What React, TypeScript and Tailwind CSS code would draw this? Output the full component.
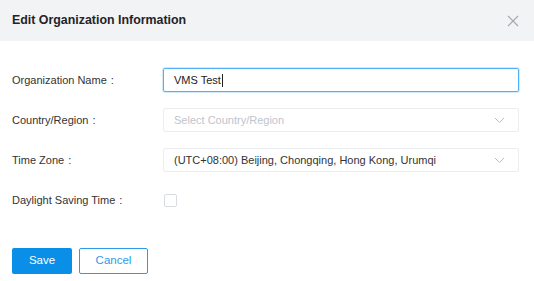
import React from "react";

const Chevron = () => (
  <svg width="11" height="7" viewBox="0 0 11 7" className="shrink-0">
    <path d="M1 1 L5.5 5.5 L10 1" fill="none" stroke="#b8bcc4" strokeWidth="1" />
  </svg>
);

export default function App() {
  return (
    <div className="w-[534px] h-[281px] bg-white overflow-hidden" style={{ fontFamily: '"Liberation Sans", Arial, sans-serif' }}>
      <div className="h-[41px] bg-[#f2f3f5] flex items-center justify-between pl-[12px] pr-[15px]">
        <span className="text-[12.4px] font-bold text-[#1f2329]">Edit Organization Information</span>
        <svg width="12" height="12" viewBox="0 0 12 12">
          <path d="M1 1 L11 11 M11 1 L1 11" stroke="#a3a6ad" strokeWidth="1.1" />
        </svg>
      </div>
      <div className="pl-[12px] pr-[15px] pt-[27px] flex flex-col gap-[16px]">
        <div className="flex items-center h-[24px]">
          <div className="w-[151px] text-[11px] text-[#333]">Organization Name<span className="ml-[4px]">:</span></div>
          <div className="flex-1 h-[24px] border border-[#4fb0f5] rounded-[2px] shadow-[0_0_0_1px_rgba(79,176,245,0.25)] flex items-center px-[10px] text-[11px] text-[#222]">
            VMS Test<span className="w-px h-[13px] bg-[#222] ml-[1px]" />
          </div>
        </div>
        <div className="flex items-center h-[24px]">
          <div className="w-[151px] text-[11px] text-[#333]">Country/Region<span className="ml-[4px]">:</span></div>
          <div className="flex-1 h-[24px] border border-[#ebedf0] rounded-[2px] flex items-center justify-between pl-[10px] pr-[13px] text-[11px] text-[#c0c4cc]">
            <span>Select Country/Region</span>
            <Chevron />
          </div>
        </div>
        <div className="flex items-center h-[24px]">
          <div className="w-[151px] text-[11px] text-[#333]">Time Zone<span className="ml-[4px]">:</span></div>
          <div className="flex-1 h-[24px] border border-[#ebedf0] rounded-[2px] flex items-center justify-between pl-[10px] pr-[13px] text-[11px] text-[#333]">
            <span>(UTC+08:00) Beijing, Chongqing, Hong Kong, Urumqi</span>
            <Chevron />
          </div>
        </div>
        <div className="flex items-center h-[24px]">
          <div className="w-[151px] text-[11px] text-[#333]">Daylight Saving Time<span className="ml-[4px]">:</span></div>
          <div className="w-[13px] h-[13px] border border-[#d9dce1] rounded-[2px] ml-[1px]" />
        </div>
      </div>
      <div className="pl-[12px] pt-[36px] flex gap-[7px]">
        <button className="w-[60px] h-[26px] bg-[#0a8fe8] text-white text-[11.5px] rounded-[2px]">Save</button>
        <button className="w-[69px] h-[26px] border border-[#2f9ae8] text-[#2f9ae8] text-[11.5px] rounded-[2px] bg-white">Cancel</button>
      </div>
    </div>
  );
}
